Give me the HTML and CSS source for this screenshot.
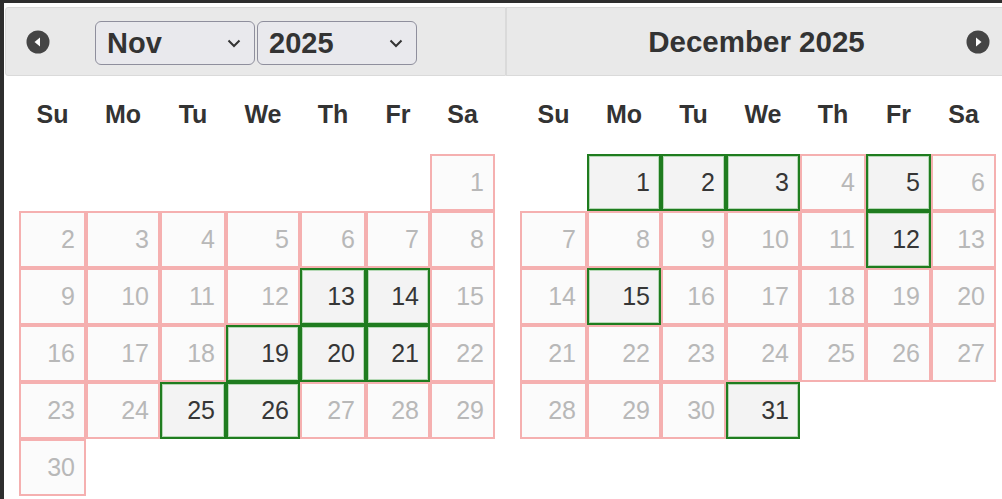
FILE: index.html
```html
<!DOCTYPE html>
<html lang="en">
<head>
<meta charset="utf-8">
<title>Datepicker</title>
<link rel="stylesheet" href="styles.css">
</head>
<body>
<div class="frame">
  <div class="datepicker">
    <div class="group">
      <div class="header header-left">
        <a class="nav-icon" title="Prev">
          <svg width="24" height="24" viewBox="0 0 24 24"><circle cx="12" cy="12" r="11.5" fill="#454545"/><polygon points="8.5,12 14,7.5 14,16.5" fill="#fff"/></svg>
        </a>
        <div class="selects">
          <span class="select-wrap">
            <select class="select"><option>Nov</option></select>
            <svg class="chev" width="14" height="9" viewBox="0 0 14 9"><polyline points="1.5,1.5 7,7 12.5,1.5" fill="none" stroke="#333" stroke-width="2"/></svg>
          </span>
          <span class="select-wrap">
            <select class="select"><option>2025</option></select>
            <svg class="chev" width="14" height="9" viewBox="0 0 14 9"><polyline points="1.5,1.5 7,7 12.5,1.5" fill="none" stroke="#333" stroke-width="2"/></svg>
          </span>
        </div>
      </div>
      <div class="month month-nov">
        <div class="dow"><div>Su</div><div>Mo</div><div>Tu</div><div>We</div><div>Th</div><div>Fr</div><div>Sa</div></div>
        <div class="days">
          <div></div><div></div><div></div><div></div><div></div><div></div><div class="d">1</div>
          <div class="d">2</div><div class="d">3</div><div class="d">4</div><div class="d">5</div><div class="d">6</div><div class="d">7</div><div class="d">8</div>
          <div class="d">9</div><div class="d">10</div><div class="d">11</div><div class="d">12</div><div class="d sel">13</div><div class="d sel">14</div><div class="d">15</div>
          <div class="d">16</div><div class="d">17</div><div class="d">18</div><div class="d sel">19</div><div class="d sel">20</div><div class="d sel">21</div><div class="d">22</div>
          <div class="d">23</div><div class="d">24</div><div class="d sel">25</div><div class="d sel">26</div><div class="d">27</div><div class="d">28</div><div class="d">29</div>
          <div class="d">30</div>
        </div>
      </div>
    </div>
    <div class="group">
      <div class="header header-right">
        <span></span>
        <div class="title">December 2025</div>
        <a class="nav-icon nav-next" title="Next">
          <svg width="24" height="24" viewBox="0 0 24 24"><circle cx="12" cy="12" r="11.5" fill="#454545"/><polygon points="15.5,12 10,7.5 10,16.5" fill="#fff"/></svg>
        </a>
      </div>
      <div class="month month-dec">
        <div class="dow"><div>Su</div><div>Mo</div><div>Tu</div><div>We</div><div>Th</div><div>Fr</div><div>Sa</div></div>
        <div class="days">
          <div></div><div class="d sel">1</div><div class="d sel">2</div><div class="d sel">3</div><div class="d">4</div><div class="d sel">5</div><div class="d">6</div>
          <div class="d">7</div><div class="d">8</div><div class="d">9</div><div class="d">10</div><div class="d">11</div><div class="d sel">12</div><div class="d">13</div>
          <div class="d">14</div><div class="d sel">15</div><div class="d">16</div><div class="d">17</div><div class="d">18</div><div class="d">19</div><div class="d">20</div>
          <div class="d">21</div><div class="d">22</div><div class="d">23</div><div class="d">24</div><div class="d">25</div><div class="d">26</div><div class="d">27</div>
          <div class="d">28</div><div class="d">29</div><div class="d">30</div><div class="d sel">31</div>
        </div>
      </div>
    </div>
  </div>
</div>
</body>
</html>
```

FILE: styles.css
```css
html, body {
  margin: 0;
  padding: 0;
  height: 100%;
}
body {
  background: #2e2e2e;
  overflow: hidden;
  font-family: "Liberation Sans", Arial, sans-serif;
  color: #333;
}
.frame {
  margin: 3px 0 0 4px;
  height: calc(100% - 3px);
  background: #fff;
  padding: 4px 0 0 1px;
  box-sizing: border-box;
}
.datepicker {
  display: flex;
  width: 1002px;
}
.group {
  flex: 0 0 501px;
  width: 501px;
}
.header {
  box-sizing: border-box;
  height: 69px;
  background: #e9e9e9;
  border: 1px solid #dadada;
}
.header-left {
  display: flex;
  align-items: center;
  padding-left: 20px;
  border-radius: 3px 0 0 3px;
}
.header-right {
  display: grid;
  grid-template-columns: 1fr auto 1fr;
  align-items: center;
}
.nav-icon {
  display: block;
  width: 24px;
  height: 24px;
  line-height: 0;
}
.nav-next {
  justify-self: end;
  margin-right: 16px;
}
.selects {
  display: flex;
  gap: 2px;
  margin-left: 45px;
  margin-top: 2px;
}
.select-wrap {
  position: relative;
  display: block;
  width: 160px;
  height: 44px;
}
.select {
  appearance: none;
  -webkit-appearance: none;
  box-sizing: border-box;
  width: 160px;
  height: 44px;
  margin: 0;
  padding: 0 0 0 11px;
  border: 1px solid #8f8f9d;
  border-radius: 6px;
  background: #e9e9ed;
  color: #333;
  font-family: "Liberation Sans", Arial, sans-serif;
  font-weight: bold;
  font-size: 29px;
}
.chev {
  position: absolute;
  right: 14px;
  top: 18px;
  pointer-events: none;
}
.title {
  font-weight: bold;
  font-size: 29.5px;
  color: #333;
  margin-top: 1px;
}
.month-nov {
  margin-left: 14px;
}
.month-dec {
  margin-left: 14px;
}
.month-nov .dow,
.month-nov .days {
  display: grid;
  grid-template-columns: 67px 74px 66px 74px 66px 64px 65px;
}
.month-dec .dow,
.month-dec .days {
  display: grid;
  grid-template-columns: 67px 74px 65px 74px 66px 65px 65px;
}
.dow {
  height: 76px;
}
.dow div {
  display: flex;
  align-items: center;
  justify-content: center;
  font-weight: bold;
  font-size: 25px;
  color: #333;
}
.days {
  margin-top: 2px;
  grid-auto-rows: 57px;
}
.d {
  box-sizing: border-box;
  display: flex;
  align-items: center;
  justify-content: flex-end;
  padding-right: 9px;
  border: 2px solid #f5b0b0;
  background: #fbfbfb;
  color: #b8b8b8;
  font-size: 25px;
}
.d.sel {
  border-color: #1f7c1f;
  background: #f3f3f3;
  color: #363636;
  box-shadow: inset 0 0 0 1px #b5d8b5;
}
```
